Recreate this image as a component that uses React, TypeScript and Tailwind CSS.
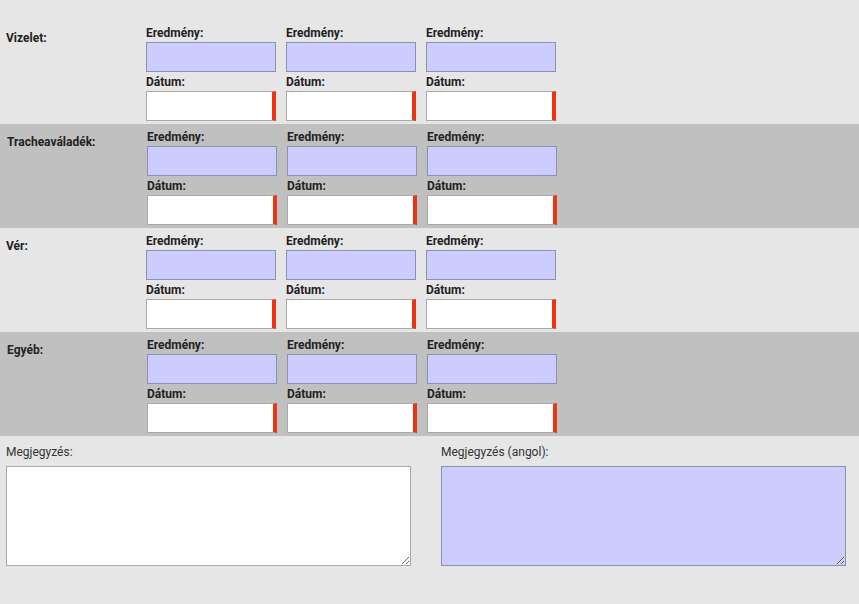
import React from "react";

const rows = [
  { name: "Vizelet:", dark: false },
  { name: "Tracheaváladék:", dark: true },
  { name: "Vér:", dark: false },
  { name: "Egyéb:", dark: true },
];

function Col() {
  return (
    <div className="flex flex-col w-[130px]">
      <div className="h-[16px] leading-[18px] text-[12px] font-bold text-[#222]">Eredmény:</div>
      <input
        type="text"
        className="mt-[2px] h-[30px] w-[130px] bg-[#ccccff] border border-[#8f8fb0] outline-none"
      />
      <div className="mt-[1px] h-[16px] leading-[18px] text-[12px] font-bold text-[#222]">Dátum:</div>
      <input
        type="text"
        className="mt-[2px] h-[30px] w-[130px] bg-white border border-[#a9a9a9] border-r-[4px] border-r-[#ea3514] outline-none"
      />
    </div>
  );
}

export default function App() {
  return (
    <div
      className="w-[859px] h-[604px] bg-[#e6e6e6] pt-[20px] overflow-hidden"
      style={{ fontFamily: "Roboto, 'Liberation Sans', Arial, sans-serif" }}
    >
      {rows.map((r) => (
        <div
          key={r.name}
          className={`flex h-[104px] pt-[4px] ${r.dark ? "bg-[#c0c0c0] pl-[7px]" : "pl-[6px]"}`}
        >
          <div className="w-[140px] pt-[6px] text-[12px] leading-[16px] font-bold text-[#222]">{r.name}</div>
          <div className="flex gap-[10px]">
            <Col />
            <Col />
            <Col />
          </div>
        </div>
      ))}
      <div className="flex px-[6px] pt-[7px] gap-[30px]">
        <div className="flex flex-col w-[405px]">
          <div className="h-[16px] leading-[18px] text-[12px] text-[#333]">Megjegyzés:</div>
          <textarea className="mt-[7px] h-[100px] w-[405px] bg-white border border-[#a9a9a9] outline-none" />
        </div>
        <div className="flex flex-col w-[405px]">
          <div className="h-[16px] leading-[18px] text-[12px] text-[#333]">Megjegyzés (angol):</div>
          <textarea className="mt-[7px] h-[100px] w-[405px] bg-[#ccccff] border border-[#8f8fb0] outline-none" />
        </div>
      </div>
    </div>
  );
}
